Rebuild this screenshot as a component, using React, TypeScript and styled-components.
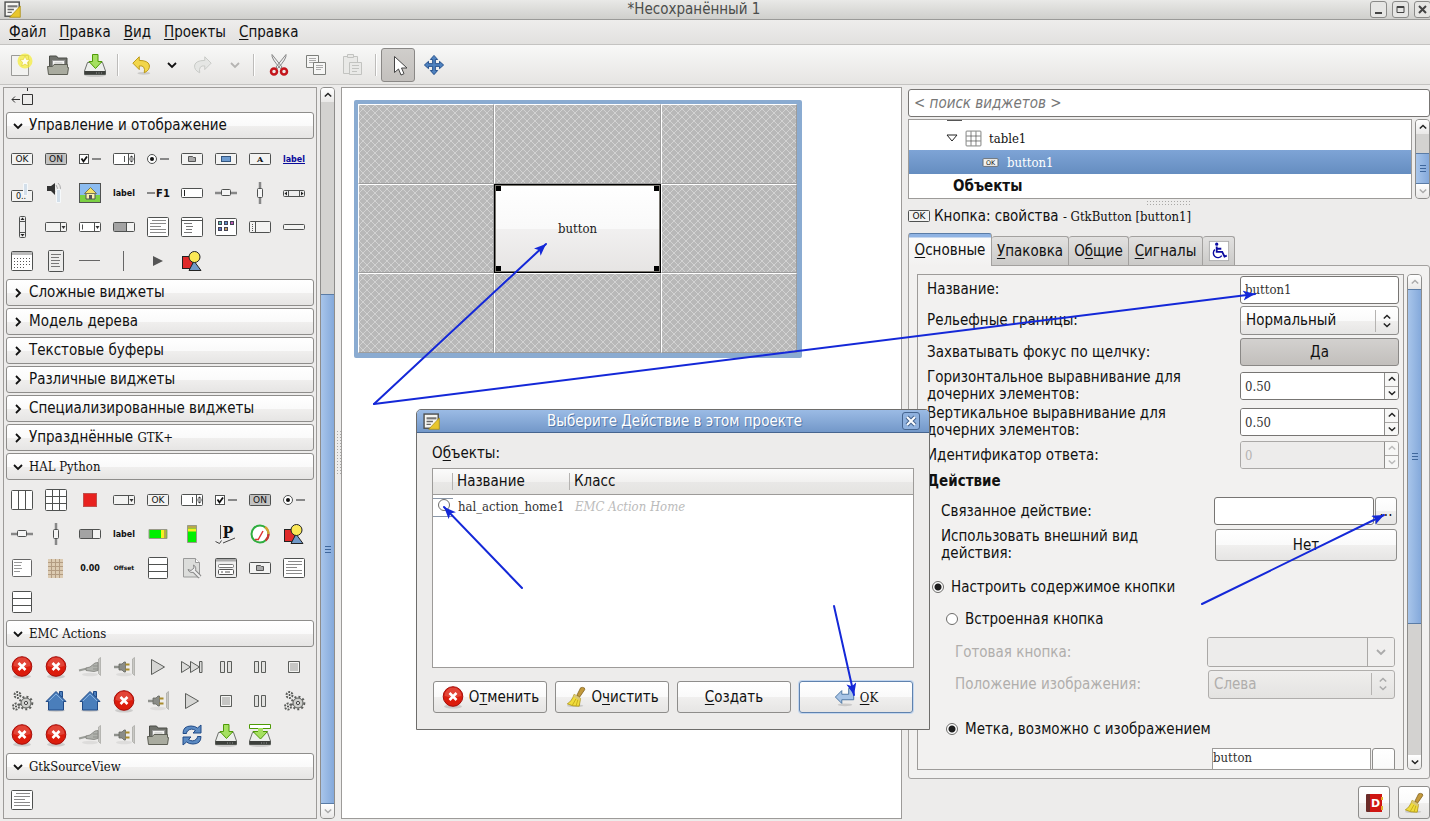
import React from "react";
import styled, { createGlobalStyle, css } from "styled-components";

const SANS = '"DejaVu Sans Condensed", "DejaVu Sans", sans-serif';
const SERIF = '"DejaVu Serif Condensed", "DejaVu Serif", serif';

const Global = createGlobalStyle`
  * { box-sizing: border-box; }
  html, body, #root { height: 100%; }
  body {
    margin: 0;
    overflow: hidden;
    background: #edeceb;
    color: #111;
    font-family: ${SANS};
    font-size: 15px;
    line-height: 17px;
  }
  button, input, select, textarea { font: inherit; color: inherit; margin: 0; padding: 0; }
  u { text-decoration-thickness: 1px; text-underline-offset: 2px; }
  svg { display: block; flex: none; }
`;

/* ---------- drawings ---------- */

const K = "#4f5150";

const Pill = ({ fill = "#f3f3f2", y = 6.5, h = 11 }: { fill?: string; y?: number; h?: number }) => (
  <rect x="1.5" y={y} width="21" height={h} rx="1" fill={fill} stroke={K} />
);
const Tag = ({ children, size = 8, x = 12, y = 15, fill = "#111", weight = "bold" }: any) => (
  <text x={x} y={y} textAnchor="middle" fontFamily="DejaVu Sans, sans-serif" fontWeight={weight} fontSize={size} fill={fill}>
    {children}
  </text>
);

const Disk = () => (
  <>
    <ellipse cx="12" cy="22" rx="11" ry="2" fill="#0002" />
    <path d="M4.5 9.500h15l3 8.500v3.500h-21v-3.500z" fill="#eceeeb" stroke="#6d706b" />
    <path d="M1.500 18h21v3.500h-21z" fill="#3d403c" />
    <path d="M13 20h1M15.500 20h1M18 20h1" stroke="#999" />
  </>
);
const Err = () => (
  <>
    <ellipse cx="12" cy="21.500" rx="9" ry="2" fill="#0002" />
    <circle cx="12" cy="11.500" r="9.800" fill="#dc1c0c" stroke="#a30d0a" />
    <path d="M3.500 11a8.500 8.500 0 0 1 17 0q-8.500 2.500-17 0" fill="#fff" opacity=".18" />
    <path d="M8.500 8l7 7M15.500 8l-7 7" stroke="#fff" strokeWidth="2.600" />
  </>
);
const Plug = ({ on = false }: { on?: boolean }) => (
  <>
    <ellipse cx="12" cy="19.500" rx="8" ry="1.800" fill="#0001" />
    <path d="M20.500 4l2-1.500v18l-2-2z" fill="#c9c9c5" stroke="#a5a5a0" strokeWidth=".7" />
    {on ? (
      <>
        <path d="M2 12h6" stroke="#8f918c" strokeWidth="2.500" />
        <path d="M7 9h3l2-2h1.500v10h-1.500l-2-2h-3z" fill="#8a8c87" stroke="#666860" strokeWidth=".8" />
        <path d="M13.500 9.500h4M13.500 14.500h4" stroke="#a98c2c" strokeWidth="2" />
      </>
    ) : (
      <>
        <path d="M1 15.500l8-2" stroke="#9a9c97" strokeWidth="2" />
        <path d="M8 13l4-1 5-4 3-.5v8l-4 1-8-1z" fill="#b0b2ad" stroke="#7d7f7a" strokeWidth=".8" />
        <path d="M15 11h5M15 14h5" stroke="#8d8f8a" />
      </>
    )}
  </>
);
const House = () => (
  <>
    <ellipse cx="12" cy="21.500" rx="9" ry="1.500" fill="#0002" />
    <path d="M15.500 6v-3.500h3v6z" fill="#4d80bd" stroke="#204a87" />
    <path d="M2 12.500l10-10 10 10h-2.500v8.500h-15v-8.500z" fill="#4a7ebb" stroke="#204a87" />
    <path d="M5 12l7-7 7 7" fill="none" stroke="#86b0de" />
  </>
);
const PlayG = () => <path d="M5.500 4.500v15l13-7.500z" fill="#d6d6d4" stroke="#5b5d5a" />;
const PauseG = () => <path d="M6.500 6.500h4v11h-4zM13.500 6.500h4v11h-4z" fill="#e2e2e0" stroke="#5b5d5a" />;
const StopG = () => (
  <>
    <path d="M6.500 6.500h11v11h-11z" fill="#c6c6c4" stroke="#5b5d5a" />
    <path d="M7.500 7.500h9v9h-9z" fill="none" stroke="#f4f4f2" />
  </>
);
const Gear = () => (
  <>
    <circle cx="16" cy="14" r="5" fill="#cfd0cd" stroke="#5b5d5a" />
    <circle cx="16" cy="14" r="6.300" fill="none" stroke="#5b5d5a" strokeWidth="2" strokeDasharray="2 2.200" />
    <circle cx="16" cy="14" r="1.600" fill="#eee" stroke="#444" />
    <circle cx="7.500" cy="6" r="3" fill="#f4f4f2" stroke="#5b5d5a" strokeWidth="2" strokeDasharray="2 1.100" />
    <circle cx="7.500" cy="6" r="1" fill="#444" />
    <circle cx="6" cy="17.500" r="3" fill="#f4f4f2" stroke="#5b5d5a" strokeWidth="2" strokeDasharray="2 1.100" />
    <circle cx="6" cy="17.500" r="1" fill="#444" />
  </>
);
const Shapes = () => (
  <g stroke="#222">
    <rect x="2.500" y="7.500" width="10" height="12" fill="#e02a2a" />
    <path d="M14 12l7 9.500h-12z" fill="#7099c8" />
    <circle cx="14.500" cy="8" r="5.500" fill="#fbe856" />
  </g>
);

const ICONS: Record<string, React.ReactNode> = {
  ok: <><Pill /><Tag weight="normal" size={9}>OK</Tag></>,
  on: <><Pill fill="#c3c3c2" /><Tag weight="normal" size={9}>ON</Tag></>,
  check: <><rect x="1.500" y="7.500" width="9" height="9" fill="#fff" stroke={K} /><path d="M3.500 11.500l2 3 3.500-5" fill="none" stroke="#111" strokeWidth="1.800" /><path d="M14 12h9" stroke="#888" strokeWidth="2" /></>,
  spin: <><Pill fill="#fff" /><path d="M16.500 7v10M12.500 9v6M17 12h5" stroke={K} /><path d="M17.500 10.500h4l-2-2zM17.500 13.500h4l-2 2z" fill="#333" /></>,
  radio: <><circle cx="6" cy="12" r="4.500" fill="#fff" stroke={K} /><circle cx="6" cy="12" r="2" fill="#111" /><path d="M14 12h9" stroke="#888" strokeWidth="2" /></>,
  file: <><Pill /><path d="M8.500 9.500h4l1 1h2v4h-7z" fill="#aaa" stroke="#555" /></>,
  color: <><Pill /><rect x="7.500" y="9.500" width="9" height="5" fill="#6d9bd0" stroke="#34567f" /></>,
  font: <><Pill /><text x="12" y="15" textAnchor="middle" fontFamily="DejaVu Serif, serif" fontWeight="bold" fontSize="8" fill="#111">A</text></>,
  link: <><Tag fill="#0a0a9a">label</Tag><path d="M1 16.500h22" stroke="#0a0a9a" /></>,
  scaleBtn: <><rect x="1.500" y="9.500" width="21" height="11" rx="1" fill="#f3f3f2" stroke={K} /><Tag x={11} y={18} weight="normal">0..</Tag><path d="M13.500 2.500h4v12h-4z" fill="#d3dfea" stroke="#f6f9fb" /></>,
  volume: <><path d="M3 5h4l4-3v12l-4-4h-4z" fill="#333" /><path d="M12 4q3 3 0 7M14 2q5 5 0 11" fill="none" stroke="#aaa" /><path d="M12.500 8.500h4v13h-4z" fill="#d3dfea" stroke="#f6f9fb" /></>,
  image: <><rect x="1.500" y="2.500" width="21" height="19" fill="#8cbcf0" stroke={K} /><path d="M2 14h20v7h-20z" fill="#7bd043" /><path d="M8 12v6h9v-6l-4.500-5z" fill="#f9f0b0" stroke="#555" /><path d="M6.500 12.500l6-6 6 6z" fill="#f3e268" stroke="#775" /><path d="M11 14h3v4h-3z" fill="#555" /></>,
  label: <Tag>label</Tag>,
  accel: <><path d="M1 12h8" stroke="#888" strokeWidth="2" /><Tag x={17} y={16} size={10}>F1</Tag></>,
  entry: <><Pill fill="#fff" y={7.5} h={9} /><path d="M4.500 9v6" stroke="#222" /></>,
  hscale: <><path d="M1 12h22" stroke="#888" strokeWidth="2.500" /><rect x="7.500" y="8.500" width="9" height="6" rx="1" fill="#f5f5f5" stroke={K} /></>,
  vscale: <><path d="M12 1v22" stroke="#888" strokeWidth="2.500" /><rect x="9.500" y="7.500" width="5" height="9" rx="1" fill="#f5f5f5" stroke={K} /></>,
  hscroll: <><Pill y={9.5} h={6} fill="#eee" /><path d="M6.500 10v5M17.500 10v5" stroke={K} /><path d="M5 10.500v4l-2.500-2zM19 10.500v4l2.500-2z" fill="#222" /></>,
  vscroll: <><rect x="9.500" y="1.500" width="6" height="21" rx="1" fill="#eee" stroke={K} /><path d="M10 6.500h5M10 17.500h5" stroke={K} /><path d="M10.500 5h4l-2-2.500zM10.500 19h4l-2 2.500z" fill="#222" /></>,
  combo: <><Pill y={7.5} h={9} /><path d="M16.500 8v8" stroke={K} /><path d="M17.500 11h4l-2 3z" fill="#333" /></>,
  comboEntry: <><Pill y={7.5} h={9} fill="#fff" /><path d="M16.500 8v8M4.500 9.500v5" stroke={K} /><path d="M17.500 11h4l-2 3z" fill="#333" /></>,
  progress: <><Pill y={7.5} h={9} /><path d="M2 8h12v8h-12z" fill="#a3a3a3" /><path d="M14.500 8v8" stroke={K} /></>,
  text: <><rect x="1.500" y="2.500" width="21" height="19" rx="1" fill="#fff" stroke={K} /><path d="M6 5.500h14M4 8.500h16M4 11.500h11M4 14.500h16M4 17.500h16" stroke="#8a8a8a" /></>,
  tree: <><rect x="1.500" y="2.500" width="21" height="19" rx="1" fill="#fff" stroke={K} /><path d="M2 5.500h20" stroke={K} /><path d="M4 8.500h8M6 11.500h7M6 14.500h6M4 17.500h8" stroke="#777" /></>,
  iconview: <><rect x="1.500" y="3.500" width="21" height="17" rx="1" fill="#fff" stroke={K} /><g stroke="#445"><rect x="4.500" y="6.500" width="3" height="3" fill="#5cc0a8" /><rect x="10.500" y="6.500" width="3" height="3" fill="#5c8cc8" /><rect x="16.500" y="6.500" width="3" height="3" fill="#c05cb8" /><rect x="4.500" y="12.500" width="3" height="3" fill="#5c70c8" /><rect x="10.500" y="12.500" width="3" height="3" fill="#c8a05c" /></g></>,
  handle: <><Pill /><path d="M7.500 7v10" stroke={K} /><path d="M4.500 9v7" stroke="#555" strokeDasharray="1 1" /></>,
  status: <Pill y={9.5} h={5} />,
  calendar: <><rect x="1.500" y="2.500" width="21" height="19" rx="1" fill="#fff" stroke={K} /><path d="M2 3h20v3h-20z" fill="#bbb" /><path d="M4 9.500h17M4 12.500h17M4 15.500h17M4 18.500h12" stroke="#555" strokeDasharray="1 2" /></>,
  menuPage: <><rect x="4.500" y="1.500" width="15" height="21" rx="1" fill="#ececeb" stroke={K} /><path d="M7 5.500h10M7 8.500h8M7 11.500h9M7 14.500h8M7 17.500h9" stroke="#777" /></>,
  hsep: <path d="M1 11.500h21" stroke="#666" />,
  vsep: <path d="M11.500 2v20" stroke="#666" />,
  arrow: <path d="M7 7v10l10-5z" fill="#555" />,
  shapes: <Shapes />,
  hbox: <><rect x="1.500" y="2.500" width="21" height="19" rx="1" fill="#fff" stroke={K} /><path d="M8.500 3v18M15.500 3v18" stroke={K} /></>,
  table: <><rect x="1.500" y="1.500" width="21" height="21" rx="1" fill="#fff" stroke={K} /><path d="M8.500 2v20M15.500 2v20M2 8.500h20M2 15.500h20" stroke={K} /></>,
  led: <rect x="5.500" y="5.500" width="13" height="13" fill="#e8221f" stroke="#c0504c" />,
  hbar: <><path d="M3 7.500h18v9h-18z" fill="#00f000" stroke="#998" /><path d="M15 8h3v8h-3z" fill="#f4f020" /><path d="M18 8h2.500v8h-2.500z" fill="#b8a84c" /></>,
  vbar: <><path d="M7.500 3.500h9v17h-9z" fill="#00f000" stroke="#998" /><path d="M8 6.500h8v3h-8z" fill="#f4f020" /><path d="M8 4h8v2.500h-8z" fill="#b8a84c" /></>,
  plot: <><text x="14" y="16" textAnchor="middle" fontFamily="DejaVu Serif Condensed, serif" fontWeight="bold" fontSize="16" fill="#111">P</text><path d="M6.500 3v14M9 21l12-5M1.500 19.500l4 2 2-3" fill="none" stroke="#444" /></>,
  meter: <><circle cx="12" cy="12" r="8.500" fill="#fff" stroke="#2fae3f" strokeWidth="2" /><path d="M17 5a8.500 8.500 0 0 1 3.500 7" fill="none" stroke="#d9a030" strokeWidth="2.200" /><path d="M20.500 12a8.500 8.500 0 0 1-3 6.500" fill="none" stroke="#c33" strokeWidth="2.200" /><path d="M10 18l5-9M7 17.500h4" stroke="#d33" strokeWidth="1.500" /></>,
  gremlin: <><rect x="2.500" y="3.500" width="19" height="17" rx="1" fill="#fff" stroke="#666" /><path d="M4 6.500h8M4 9.500h7M4 12.500h8M4 15.500h6" stroke="#999" /></>,
  keypad: <><path d="M4 3h15v19h-15z" fill="#dccbb2" /><path d="M4 6.500h15M4 10.500h15M4 14.500h15M4 18.500h15M7.500 3v19M11.500 3v19M15.500 3v19" stroke="#b39c82" /></>,
  zero: <Tag>0.00</Tag>,
  offset: <Tag size={6} y={14}>Offset</Tag>,
  vbox: <><rect x="2.500" y="1.500" width="19" height="21" rx="1" fill="#fff" stroke={K} /><path d="M3 8.500h18M3 15.500h18" stroke={K} /></>,
  tool: <><path d="M3.500 2.500h12l4 4v14.500h-16z" fill="#dcdddb" stroke="#999" /><path d="M15.500 2.500v4h4" fill="#fff" stroke="#999" /><path d="M13 14l7 7" stroke="#888" strokeWidth="4" /><path d="M8 13.500a4 4 0 0 0 7 1.500 4 4 0 0 0-1.500-6l.5 3-3 2.500z" fill="#eee" stroke="#888" /><path d="M13.500 14.500l6.500 6.500" stroke="#eee" strokeWidth="2" /></>,
  dialog: <><rect x="1.500" y="2.500" width="21" height="19" rx="1" fill="#eee" stroke={K} /><path d="M2 3h20v2.500h-20z" fill="#aaa" /><rect x="4.500" y="8.500" width="15" height="3" rx="1" fill="#fff" stroke="#777" /><rect x="4.500" y="13.500" width="15" height="5" rx="1" fill="#fff" stroke="#555" /><path d="M7 16h2M11 16h5" stroke="#555" /></>,
  estop: <Err />,
  plugOff: <Plug />,
  plugOn: <Plug on />,
  play: <PlayG />,
  forward: <path d="M1.500 6.500v11l9-5.500zM10.500 6.500v11l9-5.500zM19.500 6.500h2.500v11h-2.500z" fill="#dcdcda" stroke="#5b5d5a" />,
  pause: <PauseG />,
  stop: <StopG />,
  gears: <Gear />,
  home: <House />,
  open: <><path d="M3.500 13v-10h7l1.500 2h9v9" fill="#70726c" stroke="#4a4c47" /><path d="M6.500 7.500h12v8h-12z" fill="#f4f4f2" stroke="#999" /><path d="M8.500 10h8M8.500 12.500h8" stroke="#bbb" /><path d="M1.500 13.500h5l1.500-2h13.500v3h1l-1 7h-19z" fill="#a9ab9f" stroke="#5c5e54" /></>,
  reload: <g fill="#5b8ac2" stroke="#204a87"><path d="M3 10.500q0-7.500 8-7.500 4 0 6.500 2l3.500-3v8h-8l2.500-2.500q-4.500-3-8 .5-1 1-1 2.500z" /><path d="M21 13.500q0 7.500-8 7.500-4 0-6.500-2l-3.500 3v-8h8l-2.500 2.500q4.500 3 8-.5 1-1 1-2.500z" /></g>,
  save: <><Disk /><path d="M9.500 1.500h5.500v7h4l-6.500 7-6.500-7h3.500z" fill="#a5e060" stroke="#4e9a06" /></>,
  saveAs: <><Disk /><path d="M1.500 1.500h21v4h-21z" fill="#fff" stroke="#4e9a06" /><path d="M5 8.500h14.500l-7 7.500z" fill="#a5e060" stroke="#4e9a06" /><path d="M10 5h5v5h-5z" fill="#a5e060" /></>,
  scrollTo: <path d="M17.500 0v3M2 11.500h8M5 8.500l-3 3 3 3M12.500 6.500h10v10h-10z" fill="none" stroke="#333" />,
  fresh: <><path d="M2.500 2.500h17v20h-17z" fill="#f2f2f0" stroke="#9a9a97" /><circle cx="16" cy="8" r="7.500" fill="#f6ee3c" opacity=".75" /><path d="M16 3l1.500 3.500 3.500.3-2.600 2.500.8 3.700-3.200-1.900-3.200 1.900.8-3.700-2.600-2.500 3.500-.3z" fill="#fffef0" stroke="#e0cf2c" strokeWidth=".6" /></>,
  undo: <><ellipse cx="14" cy="21" rx="7" ry="1.500" fill="#0002" /><path d="M9 3l-7 7 7 7v-4q7-1 5.500 7.500 6.500-3 5.500-8.500-1.500-5-11-5z" fill="#f2d64a" stroke="#b8940c" /></>,
  redo: <path d="M15 3l7 7-7 7v-4q-7-1-5.500 7.500-6.500-3-5.500-8.500 1.500-5 11-5z" fill="#e5e6e4" stroke="#c5c7c4" />,
  cut: <><path d="M5 1.500q-1 4 8.500 14l1.500-1.500zM19 1.500q1 4-8.500 14l-1.500-1.500z" fill="#eee" stroke="#888" /><g fill="none" stroke="#c4161c" strokeWidth="2.500"><circle cx="7" cy="18.500" r="3" /><circle cx="17" cy="18.500" r="3" /></g></>,
  copy: <g fill="#f6f6f5" stroke="#7c7e7a"><path d="M2.500 2.500h12v12h-12z" /><path d="M5 5.500h7M5 7.500h7M5 9.500h5" stroke="#aaa" /><path d="M9.500 9.500h12v12h-12z" /><path d="M12 12.500h7M12 14.500h7M12 16.500h5" stroke="#aaa" /></g>,
  paste: <g fill="#e9e9e7" stroke="#c2c3c0"><path d="M3.500 3.500h14v17h-14z" /><path d="M7.500 1.500h6v3h-6zM9.500 9.500h12v12h-12z" /><path d="M12 12.500h7M12 15.500h7M12 18.500h5" /></g>,
  pointer: <path d="M8.500 3.500v16l4-3.500 2.500 6 3-1.300-2.500-5.700h5.500z" fill="#fff" stroke="#444" />,
  move: <path d="M12 1.500l4 4.500h-2.500v4.500h4.500v-2.500l4.500 4-4.500 4v-2.500h-4.500v4.500h2.500l-4 4.500-4-4.500h2.500v-4.500h-4.500v2.500l-4.500-4 4.500-4v2.500h4.500v-4.500h-2.500z" fill="#4f82bf" stroke="#1f4a88" />,
  broom: <><ellipse cx="11" cy="21.500" rx="9" ry="1.500" fill="#0002" /><path d="M19 1.500q3 0 2.500 2.500l-5.500 8-3-2 4-8z" fill="#c39a3d" stroke="#7c5a14" strokeWidth=".8" /><path d="M10 9l7 4.500-1.500 8.500q-7 .5-13-2.500 5-3 7.500-10.500z" fill="#f0dc3c" stroke="#a58b10" strokeWidth=".8" /><path d="M10 9l7 4.500-.5 2.500-7.500-4.500z" fill="#d9c77a" /><path d="M12 14l-4 7M14 15l-2 7" stroke="#c3a91a" /></>,
  enter: <><ellipse cx="12" cy="20.500" rx="8" ry="1.500" fill="#0002" /><path d="M1.500 12l7-7v4h7.500v-6.500h5.500v12.500h-13v4z" fill="#a7c4e6" stroke="#46719f" /></>,
  book: <><rect x="4" y="3" width="16" height="18" rx="1" fill="#6b2b28" /><path d="M8 3h12v18h-12z" fill="#cf1512" /><path d="M20 6v3M20 15v4" stroke="#e0b030" strokeWidth="2" /><Tag x={13.5} y={16} size={11} fill="#fff">D</Tag></>,
  wheel: <><rect x="1.500" y="1.500" width="21" height="21" fill="#fff" stroke="#aaa" /><g fill="none" stroke="#0a0aa0" strokeWidth="2"><circle cx="9.500" cy="4.500" r=".8" /><path d="M9.500 7v6h6l2.500 5 2.500-1M9.500 9.500h5" /><path d="M7.500 10.500a5 5 0 1 0 7.500 6.500" strokeWidth="1.500" /></g></>,
  app: <><rect x="1.500" y="1.500" width="20" height="20" fill="#f6f6f2" stroke={K} strokeWidth="2" /><path d="M5 6h14v3h-14z" fill="#777" /><path d="M5 12h9M5 16h6" stroke="#666" strokeWidth="2" /><path d="M23 7v16h-15z" fill="#e8c62c" stroke="#a78a10" /></>,
};

const Icon = ({ name, size = 24 }: { name: string; size?: number }) => (
  <svg width={size} height={size} viewBox="0 0 24 24" aria-hidden="true">{ICONS[name]}</svg>
);

const PATHS = { down: "M1 3l4 4 4-4", up: "M1 7l4-4 4 4", right: "M3 1l4 4-4 4" };
const Chevron = ({ dir, size = 10, color = "#111" }: { dir: keyof typeof PATHS; size?: number; color?: string }) => (
  <svg width={size} height={size} viewBox="0 0 10 10" aria-hidden="true">
    <path d={PATHS[dir]} fill="none" stroke={color} strokeWidth="1.800" />
  </svg>
);

/* ---------- shared parts ---------- */

const raised = css`
  background: linear-gradient(#ffffff, #fafafa 50%, #f0efee 51%, #e6e5e4);
  border: 1px solid #8e8d8b;
  border-radius: 3px;
`;

const Latin = styled.span`
  font-family: ${SERIF};
  font-size: 13px;
`;

const Page = styled.div`
  position: relative;
  display: flex;
  flex-direction: column;
  height: 100vh;
`;

const TitleBar = styled.header`
  display: grid;
  grid-template-columns: 60px 1fr 60px;
  align-items: center;
  height: 20px;
  flex: none;
  background: linear-gradient(#e9e9e7, #cfcfcc);
  border-bottom: 1px solid #9a9a98;
  h1 {
    margin: 0;
    padding-right: 42px;
    font-size: 15px;
    font-weight: normal;
    line-height: 17px;
    text-align: center;
    color: #4b4d4b;
  }
`;
const AppMark = styled.span`
  padding-left: 4px;
`;
const WindowButtons = styled.div`
  display: flex;
  gap: 5px;
`;
const WindowButton = styled.button`
  display: grid;
  place-items: center;
  flex: none;
  width: 17px;
  height: 17px;
  background: #e6e6e4;
  border: 1px solid #8a8a88;
  border-radius: 3px;
`;

const MenuBar = styled.nav`
  display: flex;
  align-items: center;
  gap: 13px;
  height: 25px;
  flex: none;
  padding-left: 9px;
  background: linear-gradient(#eeedec, #e2e1df);
  border-bottom: 1px solid #c4c3c1;
`;
const MenuItem = styled.button`
  border: 0;
  background: none;
`;

const ToolBar = styled.div`
  display: flex;
  align-items: center;
  height: 40px;
  flex: none;
  padding-left: 2px;
  background: linear-gradient(#f8f8f7, #e6e5e3);
  border-bottom: 1px solid #c4c3c1;
`;
const Tool = styled.button<{ $w?: number; $on?: boolean }>`
  display: grid;
  place-items: center;
  width: ${(p) => p.$w ?? 37}px;
  height: 34px;
  background: ${(p) => (p.$on ? "linear-gradient(#d0cecb, #c3c0bd)" : "none")};
  border: ${(p) => (p.$on ? "1px solid #8a8886" : "0")};
  border-radius: 3px;
`;
const ToolGap = styled.span`
  width: 2px;
  height: 22px;
  margin: 0 4px;
  background: linear-gradient(90deg, #bdbcba 50%, #ffffff 50%);
`;

const Main = styled.main`
  display: flex;
  flex: 1;
  min-height: 0;
  padding: 2px 0 2px 3px;
`;

/* ---------- scroll bar ---------- */

const Track = styled.div`
  display: flex;
  flex-direction: column;
  flex: none;
  width: 15px;
  background: #d3d2d0;
  border: 1px solid #8e8d8b;
  border-radius: 4px;
  overflow: hidden;
`;
const TrackEnd = styled.button`
  display: grid;
  place-items: center;
  height: 14px;
  flex: none;
  border: 0;
  background: linear-gradient(#ffffff, #e9e8e7);
`;
const Space = styled.span<{ $part: number }>`
  flex: ${(p) => p.$part} 0 0;
`;
const Thumb = styled.span<{ $part: number }>`
  flex: ${(p) => p.$part} 0 0;
  display: grid;
  align-content: center;
  justify-content: center;
  gap: 2px;
  background: linear-gradient(90deg, #a8c5ea, #84a9db);
  border: solid #5a7ca6;
  border-width: 1px 0;
  i {
    width: 6px;
    height: 1px;
    background: #3f679c;
  }
`;
const ScrollBar = ({ before, thumb, after, upOff, downOff }: any) => (
  <Track>
    <TrackEnd aria-label="Вверх"><Chevron dir="up" size={8} color={upOff ? "#aaa" : "#222"} /></TrackEnd>
    <Space $part={before} />
    <Thumb $part={thumb}><i /><i /><i /></Thumb>
    <Space $part={after} />
    <TrackEnd aria-label="Вниз"><Chevron dir="down" size={8} color={downOff ? "#aaa" : "#222"} /></TrackEnd>
  </Track>
);

/* ---------- palette ---------- */

const Palette = styled.section`
  width: 314px;
  flex: none;
  margin-right: 3px;
  padding: 0 1px;
  border: 1px solid #9d9b99;
  overflow: hidden;
`;
const Group = styled.button`
  ${raised}
  display: flex;
  align-items: center;
  gap: 6px;
  width: 308px;
  height: 27px;
  margin: 0 1px 2px;
  padding-left: 6px;
`;
const Cells = styled.div`
  display: grid;
  grid-template-columns: repeat(9, 34px);
  grid-auto-rows: 34px;
  place-items: center;
  padding: 1px 0;
`;
const FirstRow = styled.div`
  height: 24px;
  padding-left: 5px;
`;
const Cell = styled.button`
  border: 0;
  background: none;
`;

const Expander = ({ label, open }: { label: React.ReactNode; open?: string }) => (
  <>
    <Group aria-expanded={!!open}>
      <Chevron dir={open ? "down" : "right"} />
      <span>{label}</span>
    </Group>
    {open && (
      <Cells>
        {open.split(" ").map((n, i) => (
          <Cell key={i} aria-label={n}><Icon name={n} /></Cell>
        ))}
      </Cells>
    )}
  </>
);

const Splitter = styled.div<{ $across?: boolean }>`
  display: grid;
  place-items: center;
  flex: none;
  ${(p) => (p.$across ? "height: 5px;" : "width: 6px;")}
  &::after {
    content: "";
    width: ${(p) => (p.$across ? 46 : 5)}px;
    height: ${(p) => (p.$across ? 5 : 46)}px;
    background: radial-gradient(circle, #a9a8a6 0 1px, transparent 1px) 0 0 / 3px 3px;
  }
`;

/* ---------- design canvas ---------- */

const Canvas = styled.section`
  flex: 1;
  min-width: 0;
  padding: 12px;
  background: #fff;
  border: 1px solid #9d9b99;
`;
const Design = styled.div`
  display: grid;
  grid-template: 80px 89px 80px / 136px 167px 136px;
  width: max-content;
  border: solid #8aabd1;
  border-width: 4px 5px 5px 4px;
  border-radius: 2px;
`;
const SlotBox = styled.div`
  border: solid;
  border-width: 1px;
  border-color: #fff #9d9d9d #9d9d9d #fff;
  overflow: hidden;
`;
const Slot = ({ id }: { id: string }) => (
  <SlotBox>
    <svg width="100%" height="100%" aria-hidden="true">
      <defs>
        <pattern id={id} width="8" height="8" patternUnits="userSpaceOnUse">
          <rect width="8" height="8" fill="#b8b8b8" />
          <path d="M0 0l8 8M8 0l-8 8" stroke="#d2d2d2" />
        </pattern>
      </defs>
      <rect width="100%" height="100%" fill={`url(#${id})`} />
    </svg>
  </SlotBox>
);
const Chosen = styled.button`
  border: 1px solid #000;
  color: #222;
  font-family: ${SERIF};
  font-size: 13px;
  background:
    linear-gradient(#000, #000) 0 0 / 7px 7px no-repeat,
    linear-gradient(#000, #000) 100% 0 / 7px 7px no-repeat,
    linear-gradient(#000, #000) 0 100% / 7px 7px no-repeat,
    linear-gradient(#000, #000) 100% 100% / 7px 7px no-repeat,
    linear-gradient(#ffffff, #f9f9f9 50%, #f1f0f0 51%, #e6e4e3);
  background-origin: border-box;
  outline: 1px solid #77756f;
  outline-offset: -2px;
`;

/* ---------- inspector ---------- */

const Side = styled.aside`
  display: flex;
  flex-direction: column;
  flex: none;
  width: 522px;
  margin-left: 6px;
  padding-top: 2px;
`;
const Search = styled.input`
  flex: none;
  height: 28px;
  padding-left: 5px;
  border: 1px solid #777573;
  border-radius: 3px;
  background: #fff;
  &::placeholder {
    color: #777;
    font-style: italic;
    opacity: 1;
  }
`;
const TreeArea = styled.div`
  display: flex;
  flex: none;
  gap: 3px;
  height: 80px;
  margin: 2px 0 1px;
`;
const Tree = styled.div`
  flex: 1;
  padding-top: 6px;
  border: 1px solid #9d9b99;
  background: linear-gradient(#555, #555) 38px 0 / 15px 1px no-repeat, #fff;
`;
const TreeRow = styled.div<{ $sel?: boolean; $pad: number; $gap?: number }>`
  display: flex;
  align-items: center;
  gap: ${(p) => p.$gap ?? 8}px;
  height: 24px;
  padding-left: ${(p) => p.$pad}px;
  color: ${(p) => (p.$sel ? "#fff" : "#111")};
  background: ${(p) => (p.$sel ? "linear-gradient(#7ea4d6, #658dc0)" : "none")};
`;
const Subject = styled.h2`
  display: flex;
  align-items: center;
  flex: none;
  gap: 3px;
  height: 22px;
  margin: 0 0 6px -1px;
  font-size: 15px;
  font-weight: normal;
`;
const Tabs = styled.div`
  display: flex;
  align-items: flex-end;
  flex: none;
  height: 32px;
`;
const Tab = styled.button<{ $on?: boolean; $w: number }>`
  display: grid;
  place-items: center;
  width: ${(p) => p.$w}px;
  height: ${(p) => (p.$on ? 33 : 29)}px;
  margin-bottom: ${(p) => (p.$on ? -1 : 0)}px;
  border: 1px solid #a3a19f;
  border-width: ${(p) => (p.$on ? "1px 1px 0" : "1px 1px 0 0")};
  border-radius: 3px 3px 0 0;
  position: relative;
  background: ${(p) =>
    p.$on ? "linear-gradient(#8fb3e3 3px, #fbfbfb 4px, #f2f1f0)" : "linear-gradient(#e2e1e0, #cbcac8)"};
  ${(p) => p.$on && "border-top-color: #5a7ca6; z-index: 1;"}
`;
const Notebook = styled.div`
  display: flex;
  flex: 1;
  min-height: 0;
  gap: 3px;
  padding: 8px 7px 8px 8px;
  border: 1px solid #a3a19f;
  border-radius: 0 3px 3px 3px;
  background: #f2f1f0;
`;
const Form = styled.form`
  display: flex;
  flex-direction: column;
  flex: 1;
  gap: 2px;
  padding: 0 4px 0 9px;
  border: 1px solid #9d9b99;
  overflow: hidden;
`;
const Row = styled.div<{ $h: number; $in?: number; $end?: number; $top?: number; $off?: boolean }>`
  display: flex;
  align-items: center;
  justify-content: space-between;
  flex: none;
  height: ${(p) => p.$h}px;
  margin-top: ${(p) => p.$top ?? 0}px;
  padding: 0 ${(p) => p.$end ?? 0}px 0 ${(p) => p.$in ?? 0}px;
  color: ${(p) => (p.$off ? "#b0aeac" : "#111")};
  label { max-width: 260px; }
`;
const Heading = styled.h3`
  flex: none;
  margin: 0;
  font-size: 15px;
  line-height: 20px;
`;
const Field = styled.input<{ $w: number }>`
  width: ${(p) => p.$w}px;
  height: 28px;
  padding-left: 4px;
  border: 1px solid #777573;
  border-radius: 3px;
  background: #fff;
  color: #333;
  font-family: ${SERIF};
  font-size: 13px;
`;
const Push = styled.button<{ $w: number; $h?: number; $down?: boolean }>`
  ${raised}
  width: ${(p) => p.$w}px;
  height: ${(p) => p.$h ?? 28}px;
  ${(p) => p.$down && "background: linear-gradient(#d3d1cf, #c2bfbc); border-color: #8a8886;"}
`;
const Pair = styled.div<{ $gap?: number }>`
  display: flex;
  gap: ${(p) => p.$gap ?? 0}px;
`;
const SpinBox = styled.div<{ $off?: boolean }>`
  display: flex;
  width: 159px;
  height: 28px;
  border: 1px solid ${(p) => (p.$off ? "#aaa8a6" : "#777573")};
  border-radius: 3px;
  overflow: hidden;
  input {
    flex: 1;
    min-width: 0;
    padding-left: 4px;
    border: 0;
    background: ${(p) => (p.$off ? "#edeceb" : "#fff")};
    color: ${(p) => (p.$off ? "#b5b3b1" : "#333")};
    font-family: ${SERIF};
    font-size: 13px;
  }
`;
const Steps = styled.div`
  display: grid;
  width: 14px;
  border-left: 1px solid #8e8d8b;
  button {
    display: grid;
    place-items: center;
    border: 0;
    background: #f7f7f6;
  }
  button + button { border-top: 1px solid #a9a7a5; }
`;
const Spin = ({ id, value, off }: { id: string; value: string; off?: boolean }) => (
  <SpinBox $off={off}>
    <input id={id} defaultValue={value} disabled={off} />
    <Steps>
      <button type="button" aria-label="Больше"><Chevron dir="up" size={8} color={off ? "#bbb" : "#222"} /></button>
      <button type="button" aria-label="Меньше"><Chevron dir="down" size={8} color={off ? "#bbb" : "#222"} /></button>
    </Steps>
  </SpinBox>
);
const SelectBox = styled.div<{ $w: number; $off?: boolean }>`
  ${raised}
  display: grid;
  align-items: center;
  width: ${(p) => p.$w}px;
  height: 29px;
  ${(p) => p.$off && "background: linear-gradient(#efeeed, #e4e3e1); border-color: #b0aeac;"}
  select {
    grid-area: 1 / 1;
    appearance: none;
    width: 100%;
    height: 100%;
    padding-left: 5px;
    border: 0;
    background: none;
    opacity: 1;
  }
  > span {
    grid-area: 1 / 1;
    justify-self: end;
    display: grid;
    place-content: center;
    width: 23px;
    height: 22px;
    border-left: 1px solid #b5b3b1;
    pointer-events: none;
  }
`;
const Select = ({ id, w, value, off }: { id: string; w: number; value: string; off?: boolean }) => (
  <SelectBox $w={w} $off={off}>
    <select id={id} disabled={off}><option>{value}</option></select>
    <span>
      <Chevron dir="up" size={8} color={off ? "#aaa" : "#222"} />
      <Chevron dir="down" size={8} color={off ? "#aaa" : "#222"} />
    </span>
  </SelectBox>
);
const ComboField = styled.div`
  display: flex;
  width: 188px;
  height: 30px;
  border: 1px solid #aaa8a6;
  border-radius: 3px;
  overflow: hidden;
  input { flex: 1; min-width: 0; border: 0; background: #edeceb; }
  button { display: grid; place-items: center; width: 27px; border: 0; border-left: 1px solid #aaa8a6; background: #f0efee; }
`;
const Choice = styled.label<{ $top: number; $in?: number }>`
  display: flex;
  align-items: center;
  flex: none;
  gap: 7px;
  height: 24px;
  margin-top: ${(p) => p.$top}px;
  padding-left: ${(p) => p.$in ?? 0}px;
`;
const Dot = styled.input.attrs({ type: "radio" })`
  appearance: none;
  flex: none;
  width: 12px;
  height: 12px;
  border: 1px solid #6d6c6a;
  border-radius: 50%;
  background: #fff;
  &:checked { background: radial-gradient(circle, #1d1d1d 0 3px, #fff 4px); }
`;
const TextEntry = styled.textarea`
  width: 159px;
  height: 40px;
  border: 1px solid #9d9b99;
  background: #fff;
  color: #333;
  font-family: ${SERIF};
  font-size: 13px;
  resize: none;
`;
const Footer = styled.div`
  display: flex;
  justify-content: flex-end;
  flex: none;
  gap: 8px;
  padding: 7px 0 0;
`;
const IconPush = styled.button`
  ${raised}
  display: grid;
  place-items: center;
  width: 32px;
  height: 33px;
`;

/* ---------- dialog ---------- */

const Dialog = styled.section`
  position: absolute;
  left: 416px;
  top: 409px;
  width: 514px;
  background: #edeceb;
  border: 1px solid #6e6d6b;
  border-radius: 5px 5px 0 0;
`;
const DialogTitle = styled.header`
  display: grid;
  grid-template-columns: 24px 1fr 24px;
  align-items: center;
  height: 23px;
  padding: 0 3px 0 6px;
  border-bottom: 1px solid #46658f;
  border-radius: 4px 4px 0 0;
  background: linear-gradient(#9bbbe5, #7398c9);
  h2 {
    margin: 0;
    font-size: 15px;
    font-weight: normal;
    text-align: center;
    color: #fff;
    text-shadow: 1px 1px #5478a8;
  }
`;
const DialogClose = styled.button`
  display: grid;
  place-items: center;
  width: 18px;
  height: 18px;
  border: 1px solid #46658f;
  border-radius: 3px;
  background: #8fb1de;
`;
const DialogBody = styled.div`
  padding: 12px 15px 16px;
  p { margin: 0 0 6px; }
`;
const ListBox = styled.div`
  height: 200px;
  border: 1px solid #9d9b99;
  background: #fff;
`;
const List = styled.table`
  width: 100%;
  border-collapse: collapse;
  table-layout: fixed;
  th {
    height: 25px;
    padding: 0 0 0 4px;
    border-bottom: 1px solid #9d9b99;
    font-weight: normal;
    text-align: left;
    background:
      linear-gradient(#b5b3b1, #b5b3b1) 100% 4px / 1px 17px no-repeat,
      linear-gradient(#fbfbfb, #f2f1f0 50%, #e9e8e7 51%, #e4e3e1);
  }
  th:last-child { background: linear-gradient(#fbfbfb, #f2f1f0 50%, #e9e8e7 51%, #e4e3e1); }
  td {
    height: 25px;
    padding: 0 0 0 5px;
    color: #333;
    font-family: ${SERIF};
    font-size: 13px;
    white-space: nowrap;
  }
  td:last-child { color: #bbb; font-style: italic; }
  td:first-child {
    background:
      linear-gradient(#8a97a8, #8a97a8) 0 3px / 100% 1px no-repeat,
      linear-gradient(#8a97a8, #8a97a8) 0 21px / 100% 1px no-repeat;
  }
`;
const Actions = styled.div`
  display: grid;
  grid-template-columns: repeat(4, 1fr);
  gap: 8px;
  margin: 13px 0 0;
  padding: 0 1px;
`;
const Action = styled.button<{ $main?: boolean }>`
  ${raised}
  display: flex;
  align-items: center;
  justify-content: center;
  gap: 4px;
  height: 32px;
  ${(p) => p.$main && "border-color: #5f82ae; box-shadow: 0 0 0 1px #c3d6ee;"}
`;

/* ---------- annotation arrows ---------- */

const Arrows = styled.svg`
  position: absolute;
  left: 0;
  top: 0;
  pointer-events: none;
`;
const LINES = [
  [374, 404, 546, 244],
  [374, 404, 1255, 294],
  [522, 588, 444, 507],
  [834, 606, 854, 695],
  [1202, 604, 1384, 515],
];

export default function App() {
  return (
    <Page>
      <Global />
      <TitleBar>
        <AppMark><Icon name="app" size={17} /></AppMark>
        <h1>*Несохранённый 1</h1>
        <WindowButtons>
          <WindowButton aria-label="Свернуть"><svg width="11" height="11"><path d="M2 9h7" stroke="#444" strokeWidth="2" /></svg></WindowButton>
          <WindowButton aria-label="Развернуть"><svg width="11" height="11"><path d="M2 2.500h7v6h-7zM2 3.500h7" fill="none" stroke="#444" /></svg></WindowButton>
          <WindowButton aria-label="Закрыть"><svg width="11" height="11"><path d="M2 2l7 7M9 2l-7 7" stroke="#444" strokeWidth="2" /></svg></WindowButton>
        </WindowButtons>
      </TitleBar>
      <MenuBar>
        <MenuItem><u>Ф</u>айл</MenuItem>
        <MenuItem><u>П</u>равка</MenuItem>
        <MenuItem><u>В</u>ид</MenuItem>
        <MenuItem><u>П</u>роекты</MenuItem>
        <MenuItem><u>С</u>правка</MenuItem>
      </MenuBar>
      <ToolBar>
        <Tool aria-label="Создать"><Icon name="fresh" /></Tool>
        <Tool aria-label="Открыть"><Icon name="open" /></Tool>
        <Tool aria-label="Сохранить"><Icon name="save" /></Tool>
        <ToolGap />
        <Tool aria-label="Отменить" $w={38}><Icon name="undo" size={22} /></Tool>
        <Tool aria-label="История отмен" $w={22}><Chevron dir="down" /></Tool>
        <Tool aria-label="Повторить" $w={38}><Icon name="redo" size={22} /></Tool>
        <Tool aria-label="История повторов" $w={28}><Chevron dir="down" color="#b5b4b2" /></Tool>
        <ToolGap />
        <Tool aria-label="Вырезать" $w={40}><Icon name="cut" /></Tool>
        <Tool aria-label="Копировать" $w={34}><Icon name="copy" /></Tool>
        <Tool aria-label="Вставить" $w={38}><Icon name="paste" /></Tool>
        <ToolGap />
        <Tool aria-label="Выделение" $w={34} $on><Icon name="pointer" /></Tool>
        <Tool aria-label="Перемещение"><Icon name="move" size={22} /></Tool>
      </ToolBar>

      <Main>
        <Palette>
          <FirstRow><Icon name="scrollTo" /></FirstRow>
          <Expander
            label="Управление и отображение"
            open="ok on check spin radio file color font link scaleBtn volume image label accel entry hscale vscale hscroll vscroll combo comboEntry progress text tree iconview handle status calendar menuPage hsep vsep arrow shapes"
          />
          <Expander label="Сложные виджеты" />
          <Expander label="Модель дерева" />
          <Expander label="Текстовые буферы" />
          <Expander label="Различные виджеты" />
          <Expander label="Специализированные виджеты" />
          <Expander label={<>Упразднённые <Latin>GTK+</Latin></>} />
          <Expander
            label={<Latin>HAL Python</Latin>}
            open="hbox table led combo ok spin check on radio hscale vscale progress label hbar vbar plot meter shapes gremlin keypad zero offset vbox tool dialog file text vbox"
          />
          <Expander
            label={<Latin>EMC Actions</Latin>}
            open="estop estop plugOff plugOn play forward pause pause stop gears home home estop plugOn play stop pause gears estop estop plugOff plugOn open reload save saveAs"
          />
          <Expander label={<Latin>GtkSourceView</Latin>} open="text" />
        </Palette>
        <ScrollBar before={193} thumb={509} after={0} downOff />
        <Splitter />

        <Canvas>
          <Design>
            <Slot id="s1" /><Slot id="s2" /><Slot id="s3" />
            <Slot id="s4" /><Chosen>button</Chosen><Slot id="s5" />
            <Slot id="s6" /><Slot id="s7" /><Slot id="s8" />
          </Design>
        </Canvas>

        <Side>
          <Search placeholder="&lt; поиск виджетов &gt;" aria-label="Поиск виджетов" />
          <TreeArea>
            <Tree>
              <TreeRow $pad={37} $gap={7}>
                <svg width="12" height="10" aria-hidden="true"><path d="M1 2h10l-5 6z" fill="#fff" stroke="#222" /></svg>
                <Icon name="table" size={17} /><Latin>table1</Latin>
              </TreeRow>
              <TreeRow $pad={73} $sel><Icon name="ok" size={17} /><Latin>button1</Latin></TreeRow>
              <TreeRow $pad={44}><b>Объекты</b></TreeRow>
            </Tree>
            <ScrollBar before={21} thumb={31} after={0} downOff />
          </TreeArea>
          <Splitter $across />
          <Subject><Icon name="ok" /><span>Кнопка: свойства <Latin>- GtkButton [button1]</Latin></span></Subject>
          <Tabs role="tablist">
            <Tab role="tab" $w={84} $on><span><u>О</u>сновные</span></Tab>
            <Tab role="tab" $w={77}><span><u>У</u>паковка</span></Tab>
            <Tab role="tab" $w={60}><span>О<u>б</u>щие</span></Tab>
            <Tab role="tab" $w={74}><span><u>С</u>игналы</span></Tab>
            <Tab role="tab" $w={32} aria-label="Доступность"><Icon name="wheel" size={22} /></Tab>
          </Tabs>
          <Notebook>
            <Form onSubmit={(e) => e.preventDefault()}>
              <Row $h={29}><label htmlFor="name">Название:</label><Field id="name" $w={159} defaultValue="button1" /></Row>
              <Row $h={29}><label htmlFor="relief">Рельефные границы:</label><Select id="relief" w={159} value="Нормальный" /></Row>
              <Row $h={30}><label htmlFor="focus">Захватывать фокус по щелчку:</label><Push id="focus" type="button" $w={159} $down>Да</Push></Row>
              <Row $h={34}><label htmlFor="hor">Горизонтальное выравнивание для дочерних элементов:</label><Spin id="hor" value="0.50" /></Row>
              <Row $h={34}><label htmlFor="ver">Вертикальное выравнивание для дочерних элементов:</label><Spin id="ver" value="0.50" /></Row>
              <Row $h={28}><label htmlFor="resp">Идентификатор ответа:</label><Spin id="resp" value="0" off /></Row>
              <Heading>Действие</Heading>
              <Row $h={28} $in={14} $end={2} $top={4}>
                <label htmlFor="act">Связанное действие:</label>
                <Pair $gap={1}><Field id="act" $w={160} /><Push type="button" $w={22}>...</Push></Pair>
              </Row>
              <Row $h={36} $in={14} $end={2}>
                <label htmlFor="look">Использовать внешний вид действия:</label><Push id="look" type="button" $w={182} $h={32}>Нет</Push>
              </Row>
              <Choice $top={10} $in={5}><Dot name="content" defaultChecked />Настроить содержимое кнопки</Choice>
              <Choice $top={6} $in={19}><Dot name="kind" />Встроенная кнопка</Choice>
              <Row $h={30} $in={28} $end={4} $top={4} $off>
                <label htmlFor="stock">Готовая кнопка:</label>
                <ComboField><input id="stock" disabled /><button type="button" aria-label="Раскрыть" disabled><Chevron dir="down" color="#aaa" /></button></ComboField>
              </Row>
              <Row $h={30} $in={28} $end={4} $off>
                <label htmlFor="pos">Положение изображения:</label><Select id="pos" w={187} value="Слева" off />
              </Row>
              <Choice $top={16} $in={19}><Dot name="kind" defaultChecked />Метка, возможно с изображением</Choice>
              <Row $h={40} $end={4} $top={5}>
                <span />
                <Pair $gap={1}><TextEntry aria-label="Метка" defaultValue="button" /><Push type="button" aria-label="Изменить" $w={23} $h={40} /></Pair>
              </Row>
            </Form>
            <ScrollBar before={0} thumb={334} after={132} upOff />
          </Notebook>
          <Footer>
            <IconPush aria-label="Справка"><Icon name="book" /></IconPush>
            <IconPush aria-label="Очистить"><Icon name="broom" size={22} /></IconPush>
          </Footer>
        </Side>
      </Main>

      <Dialog role="dialog" aria-labelledby="dlg">
        <DialogTitle>
          <Icon name="app" size={17} />
          <h2 id="dlg">Выберите Действие в этом проекте</h2>
          <DialogClose aria-label="Закрыть"><svg width="12" height="12"><path d="M2 2l8 8M10 2l-8 8" stroke="#46658f" strokeWidth="4" /><path d="M2 2l8 8M10 2l-8 8" stroke="#fff" strokeWidth="2" /></svg></DialogClose>
        </DialogTitle>
        <DialogBody>
          <p>О<u>б</u>ъекты:</p>
          <ListBox>
            <List>
              <colgroup><col width="20" /><col width="117" /><col /></colgroup>
              <thead><tr><th aria-label="Выбор" /><th>Название</th><th>Класс</th></tr></thead>
              <tbody><tr><td><Dot name="object" aria-label="hal_action_home1" /></td><td>hal_action_home1</td><td>EMC Action Home</td></tr></tbody>
            </List>
          </ListBox>
          <Actions>
            <Action><Icon name="estop" size={24} /><span>О<u>т</u>менить</span></Action>
            <Action><Icon name="broom" size={22} /><span>О<u>ч</u>истить</span></Action>
            <Action><span><u>С</u>оздать</span></Action>
            <Action $main><Icon name="enter" size={22} /><Latin><u>O</u>K</Latin></Action>
          </Actions>
        </DialogBody>
      </Dialog>

      <Arrows width="1430" height="821" viewBox="0 0 1430 821" aria-hidden="true">
        <defs>
          <marker id="head" markerUnits="userSpaceOnUse" markerWidth="14" markerHeight="12" refX="12" refY="5" orient="auto">
            <path d="M12 5L0 0l3 5-3 5z" fill="#1428d8" />
          </marker>
        </defs>
        {LINES.map(([x1, y1, x2, y2], i) => (
          <line key={i} x1={x1} y1={y1} x2={x2} y2={y2} stroke="#1428d8" strokeWidth="2" strokeLinecap="round" markerEnd="url(#head)" />
        ))}
      </Arrows>
    </Page>
  );
}
